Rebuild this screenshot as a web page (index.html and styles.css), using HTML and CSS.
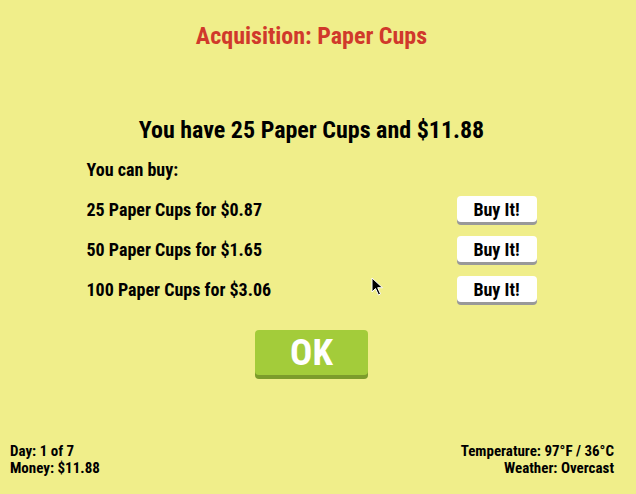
FILE: index.html
```html
<!DOCTYPE html>
<html>
<head>
<meta charset="utf-8">
<link rel="stylesheet" href="styles.css">
</head>
<body>
<div class="screen">
  <div class="main">
    <h1 class="title">Acquisition: Paper Cups</h1>
    <div class="panel">
      <h2 class="have">You have 25 Paper Cups and $11.88</h2>
      <div class="offers">
        <div class="canbuy">You can buy:</div>
        <div class="row"><span>25 Paper Cups for $0.87</span><button class="buy">Buy It!</button></div>
        <div class="row"><span>50 Paper Cups for $1.65</span><button class="buy">Buy It!</button></div>
        <div class="row"><span>100 Paper Cups for $3.06</span><button class="buy">Buy It!</button></div>
      </div>
      <button class="ok">OK</button>
    </div>
  </div>
  <div class="footer">
    <div class="left"><div>Day: 1 of 7</div><div>Money: $11.88</div></div>
    <div class="right"><div>Temperature: 97°F / 36°C</div><div>Weather: Overcast</div></div>
  </div>
  <svg class="cursor" width="14" height="20" viewBox="0 0 14 20"><path d="M1 1 L1 15 L4.5 11.5 L7.5 18 L9.5 17 L6.7 10.7 L11.5 10.7 Z" fill="#000" stroke="#fff" stroke-width="1"/></svg>
</div>
</body>
</html>
```
FILE: styles.css
```css
html, body { margin: 0; padding: 0; }
body {
  background: #f0ee8a;
  font-family: "Roboto Condensed", Roboto, sans-serif;
  font-stretch: condensed;
  font-weight: 700;
  color: #000;
}
.screen {
  position: relative;
  width: 636px;
  height: 494px;
  display: flex;
  flex-direction: column;
}
.main {
  width: 623px;
}
.title {
  margin: 22px 0 0;
  text-align: center;
  color: #d0392b;
  font-size: 24px;
  line-height: 28px;
  font-weight: 700;
}
.panel {
  display: flex;
  flex-direction: column;
  align-items: center;
  margin-top: 66px;
}
.have {
  margin: 0;
  font-size: 24px;
  line-height: 28px;
  font-weight: 700;
}
.offers {
  width: 450px;
  margin-top: 15px;
  display: flex;
  flex-direction: column;
}
.canbuy, .row { font-size: 18px; line-height: 22px; }
.canbuy { margin-bottom: 9px; }
.row {
  display: flex;
  justify-content: space-between;
  align-items: center;
  height: 40px;
}
.buy {
  font-family: inherit;
  font-stretch: condensed;
  font-weight: 700;
  font-size: 18px;
  width: 80px;
  height: 26px;
  margin-top: -2px;
  border: none;
  border-radius: 4px;
  background: #fff;
  box-shadow: 0 3px 0 #999;
  padding: 0;
  color: #000;
}
.ok {
  margin-top: 20px;
  width: 113px;
  height: 45px;
  border: none;
  border-radius: 4px;
  background: #a3cc3a;
  box-shadow: 0 4px 0 #7c9c2b;
  color: #fff;
  font-family: inherit;
  font-stretch: condensed;
  font-weight: 700;
  font-size: 37px;
  line-height: 45px;
  padding: 0;
}
.footer {
  margin-top: auto;
  display: flex;
  justify-content: space-between;
  padding: 0 22px 17px 10px;
  font-size: 15px;
  line-height: 17px;
}
.right { text-align: right; }
.cursor { position: absolute; left: 371px; top: 277px; }
```
